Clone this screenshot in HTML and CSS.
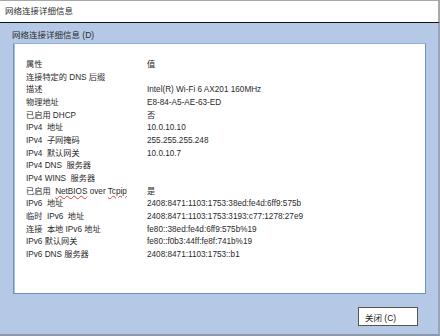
FILE: index.html
```html
<!DOCTYPE html>
<html lang="zh-CN">
<head>
  <meta charset="UTF-8">
  <meta name="viewport" content="width=device-width, initial-scale=1.0">
  <title>网络连接详细信息</title>
  <link rel="stylesheet" href="styles.css">
</head>
<body>
  <div class="titlebar">网络连接详细信息</div>
  <div class="dialog">
    <div class="group-label">网络连接详细信息 (D)</div>
    <div class="panel">
      <div class="details">
        <span>属性</span><span>值</span>
        <span>连接特定的 DNS 后缀</span><span></span>
        <span>描述</span><span>Intel(R) Wi-Fi 6 AX201 160MHz</span>
        <span>物理地址</span><span>E8-84-A5-AE-63-ED</span>
        <span>已启用 DHCP</span><span>否</span>
        <span>IPv4&nbsp; 地址</span><span>10.0.10.10</span>
        <span>IPv4&nbsp; 子网掩码</span><span>255.255.255.248</span>
        <span>IPv4&nbsp; 默认网关</span><span>10.0.10.7</span>
        <span>IPv4 DNS&nbsp; 服务器</span><span></span>
        <span>IPv4 WINS&nbsp; 服务器</span><span></span>
        <span>已启用&nbsp; <u class="spell">NetBIOS</u> over <u class="spell">Tcpip</u></span><span>是</span>
        <span>IPv6&nbsp; 地址</span><span>2408:8471:1103:1753:38ed:fe4d:6ff9:575b</span>
        <span>临时&nbsp; IPv6&nbsp; 地址</span><span>2408:8471:1103:1753:3193:c77:1278:27e9</span>
        <span>连接&nbsp; 本地 IPv6 地址</span><span>fe80::38ed:fe4d:6ff9:575b%19</span>
        <span>IPv6 默认网关</span><span>fe80::f0b3:44ff:fe8f:741b%19</span>
        <span>IPv6 DNS 服务器</span><span>2408:8471:1103:1753::b1</span>
      </div>
    </div>
    <div class="actions">
      <button type="button">关闭 (C)</button>
    </div>
  </div>
</body>
</html>
```

FILE: styles.css
```css
html, body {
  margin: 0;
  padding: 0;
}

body {
  width: 440px;
  height: 336px;
  overflow: hidden;
  font-family: 'Liberation Sans', 'Noto Sans CJK SC', sans-serif;
  font-size: 8.2px;
  color: #2a2a2a;
  background: #b5c9e7;
}

.titlebar {
  height: 21px;
  line-height: 21px;
  padding-left: 5px;
  font-size: 8.5px;
  background: #fff;
  border-top: 1px solid #a8a8a8;
  border-right: 2px solid #a8a8a8;
  border-bottom: 1px solid #111;
}

.dialog {
  box-sizing: border-box;
  height: 313px;
  padding-top: 5px;
  border-right: 2px solid #9aa6b6;
  border-bottom: 2px solid #8d99a8;
  display: flex;
  flex-direction: column;
}

.group-label {
  line-height: 14px;
  padding-left: 12px;
  font-size: 8.5px;
}

.panel {
  box-sizing: border-box;
  width: 413px;
  height: 251px;
  margin: 1px 0 0 13px;
  background: #fff;
  border: 1px solid #6d90c2;
  border-top-color: #8fb0da;
  box-shadow: inset 1px 0 0 #a9c0e0;
  padding: 15px 0 0 12px;
}

.details {
  display: grid;
  grid-template-columns: 121px 1fr;
  grid-auto-rows: 12.67px;
  line-height: 12.67px;
  white-space: nowrap;
}

.spell {
  text-decoration: underline wavy #e04040;
  text-decoration-thickness: 1px;
  text-underline-offset: 1px;
}

.actions {
  display: flex;
  justify-content: flex-end;
  padding: 13px 20px 0 0;
}

button {
  box-sizing: border-box;
  width: 60px;
  height: 19px;
  padding: 0 0 0 6px;
  text-align: left;
  font-family: inherit;
  font-size: 8.5px;
  color: #222;
  background: #fff;
  border: 1px solid #555;
  border-radius: 0;
}
```
